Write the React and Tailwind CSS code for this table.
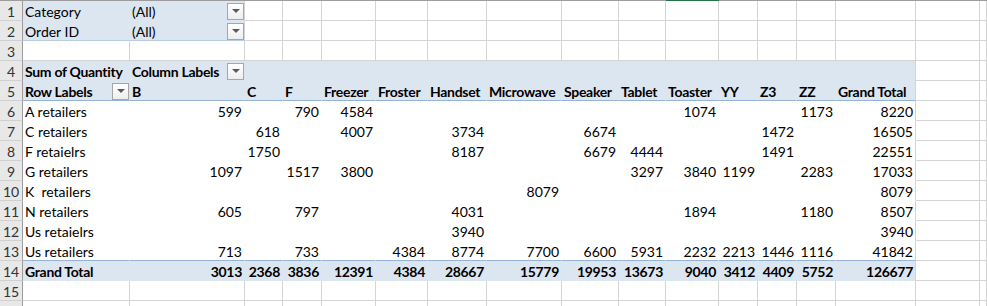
import React from "react";

const colHeads = ["B", "C", "F", "Freezer", "Froster", "Handset", "Microwave", "Speaker", "Tablet", "Toaster", "YY", "Z3", "ZZ", "Grand Total"];

const rows = [
  ["A retailers", [599, "", 790, 4584, "", "", "", "", "", 1074, "", "", 1173, 8220]],
  ["C retailers", ["", 618, "", 4007, "", 3734, "", 6674, "", "", "", 1472, "", 16505]],
  ["F retaielrs", ["", 1750, "", "", "", 8187, "", 6679, 4444, "", "", 1491, "", 22551]],
  ["G retailers", [1097, "", 1517, 3800, "", "", "", "", 3297, 3840, 1199, "", 2283, 17033]],
  ["K\u00a0 retailers", ["", "", "", "", "", "", 8079, "", "", "", "", "", "", 8079]],
  ["N retailers", [605, "", 797, "", "", 4031, "", "", "", 1894, "", "", 1180, 8507]],
  ["Us retaielrs", ["", "", "", "", "", 3940, "", "", "", "", "", "", "", 3940]],
  ["Us retailers", [713, "", 733, "", 4384, 8774, 7700, 6600, 5931, 2232, 2213, 1446, 1116, 41842]],
];

const totals = [3013, 2368, 3836, 12391, 4384, 28667, 15779, 19953, 13673, 9040, 3412, 4409, 5752, 126677];

const Drop = () => (
  <div className="w-[17px] h-[17px] shrink-0 border border-[#a6a6a6] bg-gradient-to-b from-[#ffffff] to-[#eeeeee] flex items-center justify-center">
    <svg width="8" height="5" viewBox="0 0 8 5">
      <path d="M0 0 L8 0 L4 4 Z" fill="#5b5b5b" />
    </svg>
  </div>
);

// which look a cell gets, by row r (1..16) and column c (0 = row heading, 1 = A ... 16 = P, 17 = Q)
function cellClass(r, c) {
  if (c === 0)
    return "border-r border-b border-r-[#9c9c9c] border-b-[#d0d0d0] bg-[#e8e8e8] text-[#333] flex items-center justify-center pt-[2px]";
  const grid = "border-r border-b border-[#d4d4d4] bg-white";
  if (c >= 16 || r >= 15) return grid;
  if (r <= 2 && c <= 2) {
    if (r === 1) return c === 1 ? "border-r border-b border-[#dce6f1] bg-[#dce6f1]" : "border-r border-b border-r-[#d4d4d4] border-b-[#dce6f1] bg-[#dce6f1]";
    return c === 1 ? "border-r border-b border-r-[#dce6f1] border-b-[#b8cce4] bg-[#dce6f1]" : "border-r border-b border-r-[#d4d4d4] border-b-[#b8cce4] bg-[#dce6f1]";
  }
  if (r <= 3) return grid;
  const edge = c === 15;
  if (r === 4) return edge ? "border-r border-b border-r-[#d4d4d4] border-b-[#dce6f1] bg-[#dce6f1] font-bold tracking-[-0.3px]" : "border-r border-b border-[#dce6f1] bg-[#dce6f1] font-bold tracking-[-0.3px]";
  if (r === 5) return edge ? "border-r border-b border-r-[#d4d4d4] border-b-[#95b3d7] bg-[#dce6f1] font-bold tracking-[-0.3px]" : "border-r border-b border-r-[#dce6f1] border-b-[#95b3d7] bg-[#dce6f1] font-bold tracking-[-0.3px]";
  if (r === 13) return edge ? "border-r border-b border-r-[#d4d4d4] border-b-[#95b3d7] bg-white" : "border-r border-b border-r-white border-b-[#95b3d7] bg-white";
  if (r === 14) return edge ? "border-r border-b border-r-[#d4d4d4] border-b-[#dce6f1] bg-[#dce6f1] font-bold tracking-[-0.3px]" : "border-r border-b border-[#dce6f1] bg-[#dce6f1] font-bold tracking-[-0.3px]";
  return edge ? "border-r border-b border-r-[#d4d4d4] border-b-white bg-white" : "border-r border-b border-white bg-white";
}

function cellContent(r, c) {
  if (c === 0) return r <= 15 ? r : null;
  if (c === 1) {
    if (r === 1) return <span className="pl-[2px]">Category</span>;
    if (r === 2) return <span className="pl-[2px]">Order ID</span>;
    if (r === 4) return <span className="pl-[2px]">Sum of Quantity</span>;
    if (r === 5)
      return (
        <div className="flex items-center justify-between h-full pl-[2px]">
          <span>Row Labels</span>
          <Drop />
        </div>
      );
    if (r >= 6 && r <= 13) return <span className="pl-[2px]">{rows[r - 6][0]}</span>;
    if (r === 14) return <span className="pl-[2px]">Grand Total</span>;
    return null;
  }
  if (c >= 2 && c <= 15) {
    const i = c - 2;
    if ((r === 1 || r === 2) && c === 2)
      return (
        <div className="flex items-center justify-between h-full pl-[2px]">
          <span>(All)</span>
          <Drop />
        </div>
      );
    if (r === 4 && c === 2)
      return (
        <div className="flex items-center justify-between h-full pl-[2px]">
          <span>Column Labels</span>
          <Drop />
        </div>
      );
    if (r === 5) return <span className="pl-[2px] whitespace-nowrap">{colHeads[i]}</span>;
    if (r >= 6 && r <= 13) return <span className="block text-right pr-[2px]">{rows[r - 6][1][i]}</span>;
    if (r === 14) return <span className="block text-right pr-[2px]">{totals[i]}</span>;
  }
  return null;
}

export default function App() {
  const rowNums = Array.from({ length: 16 }, (_, i) => i + 1);
  const cols = Array.from({ length: 18 }, (_, i) => i);

  return (
    <div className="w-[987px] h-[306px] overflow-hidden bg-white text-black text-[14px] leading-[19px]" style={{ fontFamily: "Lato, 'Liberation Sans', sans-serif" }}>
      <div className="h-[1px] flex">
        <div className="w-[666px] bg-[#9c9c9c]" />
        <div className="w-[53px] bg-[#217346]" />
        <div className="flex-1 bg-[#9c9c9c]" />
      </div>
      <div className="grid grid-cols-[23px_107px_115px_38px_39px_54px_52px_59px_75px_57px_47px_53px_39px_39px_39px_80px_64px_1fr] auto-rows-[20px]">
        {rowNums.map((r) =>
          cols.map((c) => (
            <div key={`${r}-${c}`} className={`${cellClass(r, c)} pt-[1px] overflow-visible whitespace-nowrap`}>
              {cellContent(r, c)}
            </div>
          ))
        )}
      </div>
    </div>
  );
}
